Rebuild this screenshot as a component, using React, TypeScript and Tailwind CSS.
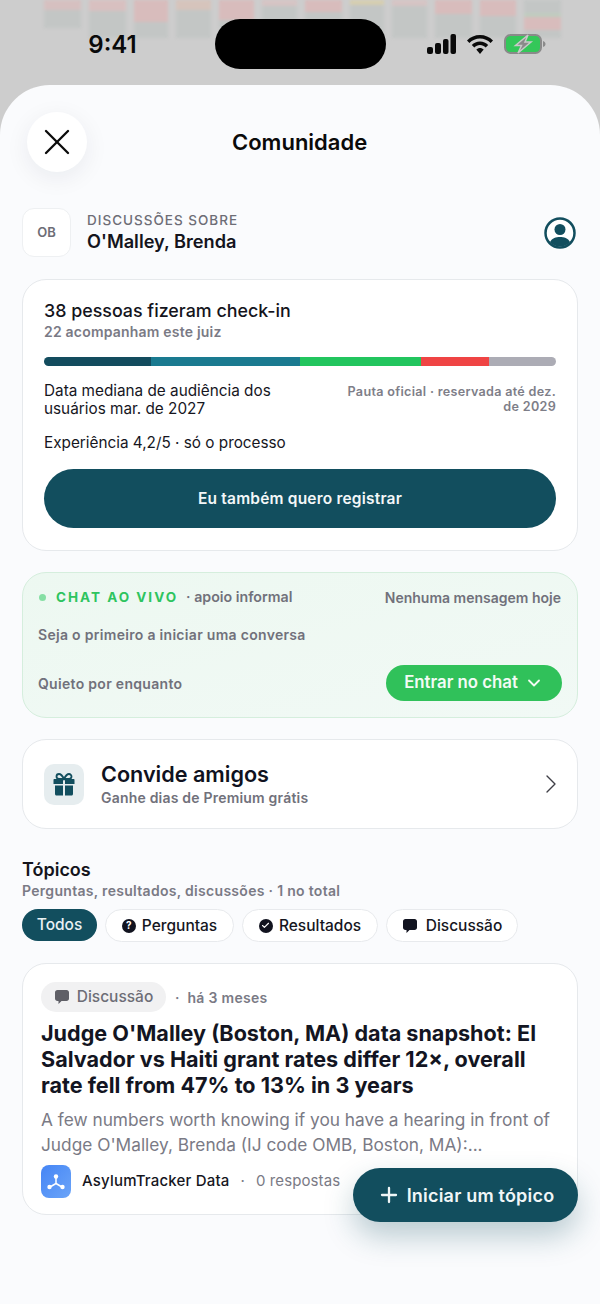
import { Check, ChevronDown, ChevronRight, Plus, X } from "lucide-react";

const FONT = { fontFamily: "Inter, 'Noto Sans', sans-serif" };

const BLUR_BARS = [
  { w: "w-[37px]", h: "h-[28px]", band: "h-[10px]", top: "bg-[#d6c0c0]" },
  { w: "w-[37px]", h: "h-[38px]", band: "h-[11px]", top: "bg-[#d8c0c0]" },
  { w: "w-[34px]", h: "h-[38px]", band: "h-[22px]", top: "bg-[#d8bcbc]" },
  { w: "w-[35px]", h: "h-[38px]", band: "h-[10px]", top: "bg-[#d6c4bc]" },
  { w: "w-[35px]", h: "h-[28px]", band: "h-[20px]", top: "bg-[#d8bcbc]" },
  { w: "w-[35px]", h: "h-[38px]", band: "h-[6px]", top: "bg-[#d6c4c4]" },
  { w: "w-[37px]", h: "h-[38px]", band: "h-[12px]", top: "bg-[#d8bcbc]" },
  { w: "w-[34px]", h: "h-[38px]", band: "h-[5px]", top: "bg-[#d6ceb0]" },
  { w: "w-[35px]", h: "h-[38px]", band: "h-[6px]", top: "bg-[#d6c4c4]" },
  { w: "w-[37px]", h: "h-[38px]", band: "h-[14px]", top: "bg-[#d8bcbc]" },
  { w: "w-[36px]", h: "h-[38px]", band: "h-[16px]", top: "bg-[#d8bcbc]" },
];

function StatusIcons() {
  return (
    <div className="flex items-center pl-[41px]">
      <svg width="29" height="20" viewBox="0 0 29 20" fill="#0a0a0a">
        <rect x="0" y="13" width="6" height="7" rx="2" />
        <rect x="8" y="9" width="6" height="11" rx="2" />
        <rect x="16" y="5" width="5.500" height="15" rx="2" />
        <rect x="23.500" y="0" width="5.500" height="20" rx="2" />
      </svg>
      <svg className="ml-[11px]" width="26" height="19" viewBox="0 0 26 19" fill="#0a0a0a">
        <path d="M13 0C8 0 3.500 2 0 5.400L2.400 8C5.200 5.200 9 3.600 13 3.600S20.800 5.200 23.600 8L26 5.400C22.500 2 18 0 13 0Z" />
        <path d="M13 6.500C9.800 6.500 6.900 7.800 4.800 9.900L7.300 12.500C8.800 11 10.800 10.100 13 10.100S17.200 11 18.700 12.500L21.200 9.900C19.100 7.800 16.200 6.500 13 6.500Z" />
        <path d="M13 13C11.600 13 10.300 13.600 9.300 14.500L13 19L16.700 14.500C15.700 13.600 14.400 13 13 13Z" />
      </svg>
      <svg className="ml-[11px]" width="42" height="20" viewBox="0 0 42 20">
        <rect x="1" y="1" width="36" height="18" rx="5.500" fill="#34c759" stroke="#8a8a8a" strokeWidth="2" />
        <path d="M39 7C40.500 7.500 41.500 8.500 41.500 10S40.500 12.500 39 13Z" fill="#8a8a8a" />
        <path d="M24 1L11.500 11.500H17.500L14 19L27 8H21Z" fill="#8a8a8a" stroke="#c9c9c9" strokeWidth="1.500" />
      </svg>
    </div>
  );
}

function ProfileIcon() {
  return (
    <svg width="32" height="32" viewBox="0 0 32 32">
      <circle cx="16" cy="16" r="14.500" fill="#fff" stroke="#124e5e" strokeWidth="2.500" />
      <circle cx="16" cy="12.500" r="5.500" fill="#124e5e" />
      <path d="M6 25C8 21 12 20 16 20S24 21 26 25C23.500 28 20 29.500 16 29.500S8.500 28 6 25Z" fill="#124e5e" />
    </svg>
  );
}

function GiftIcon() {
  return (
    <svg width="22" height="23" viewBox="0 0 22 23" fill="#124e5e">
      <path
        d="M11 6C9.500 3 8 1 6 1C4.500 1 3.500 2.200 3.500 3.500C3.500 5 4.700 6 6.500 6H15.500C17.300 6 18.500 5 18.500 3.500C18.500 2.200 17.500 1 16 1C14 1 12.500 3 11 6Z"
        fill="none"
        stroke="#124e5e"
        strokeWidth="1.800"
      />
      <path d="M1.500 6H10V11H0.500V7C0.500 6.400 0.900 6 1.500 6Z" />
      <path d="M12 6H20.500C21.100 6 21.500 6.400 21.500 7V11H12Z" />
      <path d="M2 12.500H10V22.500H3.500C2.600 22.500 2 21.900 2 21Z" />
      <path d="M12 12.500H20V21C20 21.900 19.400 22.500 18.500 22.500H12Z" />
    </svg>
  );
}

function BubbleIcon({ color, size }: { color: string; size: number }) {
  return (
    <svg width={size} height={size} viewBox="0 0 16 16" fill={color}>
      <path d="M3.500 1H12.500C14 1 15 2 15 3.500V9.500C15 11 14 12 12.500 12H7.500L4.500 15V12H3.500C2 12 1 11 1 9.500V3.500C1 2 2 1 3.500 1Z" />
    </svg>
  );
}

function AvatarIcon() {
  return (
    <svg width="22" height="22" viewBox="0 0 22 22" fill="none" stroke="#fff" strokeWidth="1.500">
      <path d="M11 6V12.500L5 16M11 12.500L17 16" />
      <circle cx="11" cy="5.500" r="2.200" fill="#fff" stroke="none" />
      <circle cx="4.500" cy="16" r="2.200" fill="#fff" stroke="none" />
      <circle cx="17.500" cy="16" r="2.200" fill="#fff" stroke="none" />
    </svg>
  );
}

function CheckinCard() {
  return (
    <section className="mx-[22px] mt-[22px] flex h-[272px] flex-col rounded-[24px] border border-[#e6e9ec] bg-white px-[21px] pt-[19px]">
      <h2 className="text-[17.850px] leading-[24px] font-medium text-[#14141c]">38 pessoas fizeram check-in</h2>
      <p className="text-[14px] leading-[18px] font-semibold tracking-[0.2px] text-[#7a7a85]">22 acompanham este juiz</p>
      <div className="mt-[16px] flex h-[9px] overflow-hidden rounded-full">
        <div className="w-[107px] bg-[#134c5e]" />
        <div className="w-[149px] bg-[#1a7a90]" />
        <div className="w-[121px] bg-[#22c55e]" />
        <div className="w-[68px] bg-[#ef4444]" />
        <div className="flex-1 bg-[#acacb5]" />
      </div>
      <div className="mt-[16px] flex justify-between">
        <p className="w-[275px] text-[15.300px] leading-[18px] text-[#16161e]">
          Data mediana de audiência dos usuários mar. de 2027
        </p>
        <p className="mt-[2px] w-[216px] text-right text-[12.600px] leading-[15px] font-semibold tracking-[0.3px] text-[#7e7e88]">
          Pauta oficial · reservada até dez. de 2029
        </p>
      </div>
      <p className="mt-[14px] text-[15.300px] leading-[21px] text-[#16161e]">Experiência 4,2/5 · só o processo</p>
      <button className="mt-[16px] h-[59px] w-full rounded-full bg-[#124e5e] text-[15.500px] font-semibold tracking-[0.2px] text-[#f3f7f8]">
        Eu também quero registrar
      </button>
    </section>
  );
}

function ChatCard() {
  return (
    <section className="mx-[22px] mt-[21px] h-[146px] rounded-[24px] border border-[#d5eedd] bg-gradient-to-br from-[#edf8f1] to-[#f1f9f5] px-[15px] pt-[14px]">
      <div className="flex h-[20px] items-center text-[14px] font-semibold text-[#71717b]">
        <span className="mr-[10px] ml-[1px] size-[7px] rounded-full bg-[#86dfa4]" />
        <span className="text-[13.500px] font-bold tracking-[2px] text-[#2ec45f]">CHAT AO VIVO</span>
        <span className="ml-[8px] text-[14.200px]">· apoio informal</span>
        <span className="ml-auto pr-[1px]">Nenhuma mensagem hoje</span>
      </div>
      <p className="mt-[18px] text-[14px] leading-[20px] font-semibold tracking-[0.3px] text-[#71717b]">
        Seja o primeiro a iniciar uma conversa
      </p>
      <div className="mt-[20px] flex items-center justify-between">
        <span className="text-[14px] font-semibold tracking-[0.3px] text-[#71717b]">Quieto por enquanto</span>
        <button className="flex h-[36px] w-[176px] items-center justify-center gap-[6px] rounded-full bg-[#30c15a] text-[16.800px] font-semibold text-[#f2fbf5]">
          Entrar no chat
          <ChevronDown size={20} strokeWidth={2.200} />
        </button>
      </div>
    </section>
  );
}

function InviteCard() {
  return (
    <section className="mx-[22px] mt-[21px] flex h-[90px] items-center rounded-[24px] border border-[#e6e9ec] bg-white pr-[10px] pl-[21px]">
      <div className="flex h-[41px] w-[40px] items-center justify-center rounded-[10px] bg-[#e6edef]">
        <GiftIcon />
      </div>
      <div className="ml-[17px] flex-1">
        <h2 className="text-[21.600px] leading-[27px] font-semibold text-[#0f1220]">Convide amigos</h2>
        <p className="text-[14px] leading-[20px] font-semibold tracking-[0.2px] text-[#71717b]">Ganhe dias de Premium grátis</p>
      </div>
      <ChevronRight size={32} color="#3f3f46" strokeWidth={1} />
    </section>
  );
}

function Filters() {
  return (
    <div className="mt-[8px] flex gap-[8px] text-[15.500px] font-medium text-[#16161e]">
      <div className="flex h-[32px] w-[75px] items-center justify-center rounded-full bg-[#124e5e] text-[#e9f1f3]">Todos</div>
      <div className="flex h-[33px] w-[129px] items-center justify-center gap-[6px] rounded-full border border-[#e8eaed] bg-white">
        <span className="flex size-[14px] items-center justify-center rounded-full bg-[#11131f] text-[10px] font-bold text-white">?</span>
        Perguntas
      </div>
      <div className="flex h-[33px] w-[136px] items-center justify-center gap-[6px] rounded-full border border-[#e8eaed] bg-white">
        <span className="flex size-[14px] items-center justify-center rounded-full bg-[#11131f]">
          <Check size={9} color="#fff" strokeWidth={3} />
        </span>
        Resultados
      </div>
      <div className="flex h-[33px] w-[132px] items-center justify-center gap-[8px] rounded-full border border-[#e8eaed] bg-white">
        <BubbleIcon color="#11131f" size={16} />
        Discussão
      </div>
    </div>
  );
}

function PostCard() {
  return (
    <article className="mx-[22px] mt-[21px] h-[252px] rounded-[24px] border border-[#e6e9ec] bg-white pt-[18px] pl-[18px]">
      <div className="flex items-center">
        <span className="flex h-[30px] w-[125px] items-center justify-center gap-[7px] rounded-full bg-[#f1f1f2] text-[15.500px] font-medium text-[#6d6d76]">
          <BubbleIcon color="#5f5f66" size={16} />
          Discussão
        </span>
        <span className="ml-[9px] text-[14px] font-semibold text-[#7a7a85]">·</span>
        <span className="ml-[8px] text-[14px] font-semibold tracking-[0.3px] text-[#7a7a85]">há 3 meses</span>
      </div>
      <h3 className="mt-[8px] w-[515px] text-[21.600px] leading-[26px] font-bold text-[#131522]">
        Judge O'Malley (Boston, MA) data snapshot: El Salvador vs Haiti grant rates differ 12×, overall rate fell from 47% to 13% in 3 years
      </h3>
      <p className="mt-[9px] w-[525px] text-[17.300px] leading-[25px] text-[#7a7a85]">
        A few numbers worth knowing if you have a hearing in front of Judge O'Malley, Brenda (IJ code OMB, Boston, MA):...
      </p>
      <div className="mt-[8px] flex items-center">
        <span className="flex h-[33px] w-[30px] items-center justify-center rounded-[8px] bg-gradient-to-br from-[#4585f5] to-[#6ba4f8]">
          <AvatarIcon />
        </span>
        <span className="ml-[11px] text-[15px] font-medium tracking-[0.2px] text-[#16161e]">AsylumTracker Data</span>
        <span className="ml-[11px] text-[15px] text-[#7a7a85]">·</span>
        <span className="ml-[11px] text-[15px] tracking-[0.1px] text-[#7a7a85]">0 respostas</span>
      </div>
    </article>
  );
}

export default function App() {
  return (
    <div className="relative h-[1304px] w-[600px] overflow-hidden bg-[#cdcdcd]" style={FONT}>
      {/* fundo borrado */}
      <div className="absolute top-0 left-[44px] flex gap-[8px] blur-[1.500px]">
        {BLUR_BARS.map((b, i) => (
          <div key={i} className={`${b.w} ${b.h} bg-[#c3c6c5]`}>
            <div className={`${b.band} ${b.top}`} />
          </div>
        ))}
        <div className="flex h-[38px] w-[37px] flex-col bg-[#c3c6c5] pt-[13px]">
          <div className="h-[4px] bg-[#bfcdbf]" />
          <div className="h-[13px] bg-[#d8bcbc]" />
        </div>
      </div>

      <header className="relative flex h-[85px] items-start">
        <div className="mt-[28px] w-[215px] pl-[10px] text-center text-[24px] leading-[34px] font-semibold text-[#0a0a0a]">
          9:41
        </div>
        <div className="mt-[19px] h-[50px] w-[171px] rounded-full bg-black" />
        <div className="mt-[34px]">
          <StatusIcons />
        </div>
      </header>

      <main className="relative h-[1219px] rounded-t-[50px] bg-[#fafbfd]">
        <div className="flex h-[123px] items-start pt-[27px] pl-[27px]">
          <button className="flex size-[60px] items-center justify-center rounded-full bg-white shadow-[0_6px_24px_rgba(20,30,50,0.07)]">
            <X size={44} color="#0a0a0a" strokeWidth={1.300} />
          </button>
          <h1 className="mt-[14px] ml-[145px] text-[22px] leading-[32px] font-semibold text-[#0a0a0a]">Comunidade</h1>
        </div>

        <div className="flex items-center pr-[24px] pl-[22px]">
          <div className="flex size-[49px] items-center justify-center rounded-[12px] border border-[#eef0f2] bg-white text-[13px] font-semibold text-[#6d6d76]">
            OB
          </div>
          <div className="ml-[16px] flex-1 pb-[3px]">
            <p className="text-[13.500px] leading-[20px] font-medium tracking-[1px] text-[#6d6d76]">DISCUSSÕES SOBRE</p>
            <p className="text-[18.200px] leading-[22px] font-semibold text-[#14141c]">O'Malley, Brenda</p>
          </div>
          <ProfileIcon />
        </div>

        <CheckinCard />
        <ChatCard />
        <InviteCard />

        <div className="mt-[30px] px-[22px]">
          <h2 className="text-[18px] leading-[22px] font-semibold text-[#14141c]">Tópicos</h2>
          <p className="text-[14px] leading-[20px] font-semibold tracking-[0.3px] text-[#7a7a85]">
            Perguntas, resultados, discussões · 1 no total
          </p>
          <Filters />
        </div>

        <PostCard />

        <button className="absolute top-[1083px] right-[22px] flex h-[54px] w-[225px] items-center justify-center gap-[6px] rounded-full bg-[#124e5e] text-[18px] font-semibold tracking-[0.2px] text-[#f0f6f7] shadow-[0_14px_30px_rgba(18,78,94,0.28)]">
          <Plus size={24} strokeWidth={2.300} />
          Iniciar um tópico
        </button>
      </main>
    </div>
  );
}
